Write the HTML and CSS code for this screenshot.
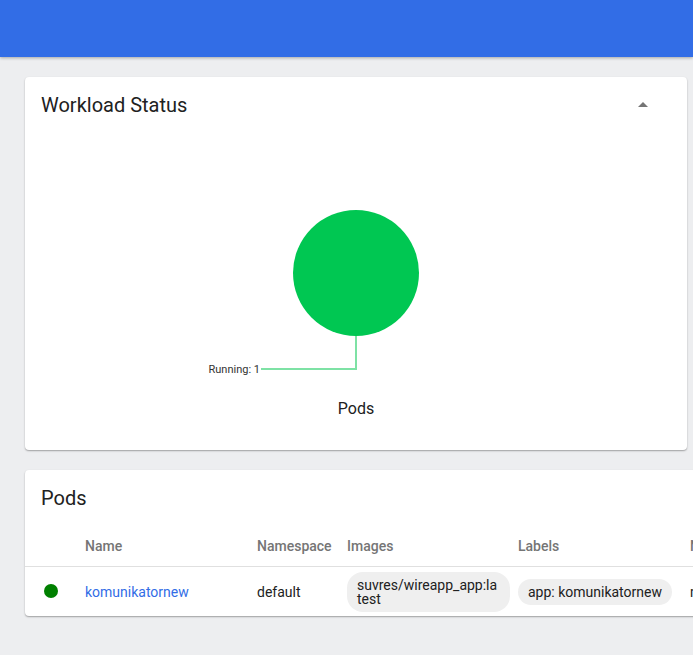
FILE: index.html
```html
<!DOCTYPE html>
<html>
<head>
<meta charset="utf-8">
<link rel="stylesheet" href="styles.css">
</head>
<body>
<header class="toolbar"></header>
<main class="content">
  <section class="card status-card">
    <div class="card-header">
      <h2 class="card-title">Workload Status</h2>
      <svg class="caret" width="24" height="24" viewBox="0 0 24 24"><path d="M7 14l5-5 5 5z" fill="#757575"/></svg>
    </div>
    <div class="chart">
      <svg width="662" height="317" viewBox="0 0 662 317">
        <circle cx="331" cy="140" r="63" fill="#00c752"/>
        <polyline points="331,203 331,236 236,236" fill="none" stroke="#7ee2a5" stroke-width="2"/>
        <text x="235" y="240" text-anchor="end" class="chart-label">Running: 1</text>
        <text x="331" y="281" text-anchor="middle" class="chart-title">Pods</text>
      </svg>
    </div>
  </section>

  <section class="card pods-card">
    <div class="card-header">
      <h2 class="card-title">Pods</h2>
    </div>
    <div class="table">
      <div class="row head">
        <div class="cell c-status"></div>
        <div class="cell c-name">Name</div>
        <div class="cell c-ns">Namespace</div>
        <div class="cell c-img">Images</div>
        <div class="cell c-lab">Labels</div>
        <div class="cell c-node">Node</div>
        <div class="cell c-st">Status</div>
        <div class="cell c-rs">Restarts</div>
      </div>
      <div class="row">
        <div class="cell c-status"><span class="dot"></span></div>
        <div class="cell c-name"><a class="link">komunikatornew</a></div>
        <div class="cell c-ns">default</div>
        <div class="cell c-img"><span class="chip chip-img">suvres/wireapp_app:latest</span></div>
        <div class="cell c-lab"><span class="chip">app: komunikatornew</span></div>
        <div class="cell c-node">minikube</div>
        <div class="cell c-st">Running</div>
        <div class="cell c-rs">0</div>
      </div>
    </div>
  </section>
</main>
</body>
</html>
```
FILE: styles.css
```css
html, body {
  margin: 0;
  padding: 0;
}
body {
  background: #edeef0;
  font-family: Roboto, "Liberation Sans", sans-serif;
  color: #212121;
  width: 693px;
  height: 655px;
  overflow: hidden;
}
.toolbar {
  height: 57px;
  background: #326de6;
  box-shadow: 0 1px 3px rgba(0,0,0,0.3);
  position: relative;
  z-index: 1;
}
.content {
  padding: 20px 0 0 25px;
  display: flex;
  flex-direction: column;
  align-items: flex-start;
  gap: 20px;
}
.card {
  background: #fff;
  border-radius: 4px;
  box-shadow: 0 1px 2px rgba(0,0,0,0.25), 0 1px 1px rgba(0,0,0,0.1);
}
.status-card {
  width: 662px;
  height: 373px;
}
.card-header {
  height: 56px;
  display: flex;
  align-items: center;
  justify-content: space-between;
  padding: 0 32px 0 16px;
}
.card-title {
  margin: 0;
  font-size: 20px;
  font-weight: 400;
  line-height: 24px;
  color: #212121;
}
.caret {
  display: block;
}
.chart svg {
  display: block;
}
.chart-label {
  font-size: 11px;
  fill: #333;
  font-family: Roboto, sans-serif;
}
.chart-title {
  font-size: 16px;
  fill: #212121;
  font-family: Roboto, sans-serif;
}
.pods-card {
  width: 1000px;
}
.table {
  display: flex;
  flex-direction: column;
}
.row {
  display: grid;
  grid-template-columns: 60px 172px 90px 171px 172px 120px 90px 90px;
  align-items: center;
  min-height: 49px;
  font-size: 14px;
}
.row.head {
  min-height: 40px;
  border-bottom: 1px solid #e0e0e0;
  color: #757575;
  font-weight: 500;
}
.cell {
  padding-right: 8px;
}
.c-status {
  display: flex;
  justify-content: center;
  padding-left: 0;
  padding-right: 8px;
}
.dot {
  width: 14px;
  height: 14px;
  border-radius: 50%;
  background: #008000;
  margin-top: -1px;
}
.link {
  color: #326de6;
  cursor: pointer;
}
.chip {
  display: inline-block;
  background: #efefef;
  border-radius: 13px;
  padding: 6px 10px;
  line-height: 14px;
  color: #212121;
}
.chip-img {
  border-radius: 16px;
  word-break: break-all;
  max-width: 143px;
}
```
